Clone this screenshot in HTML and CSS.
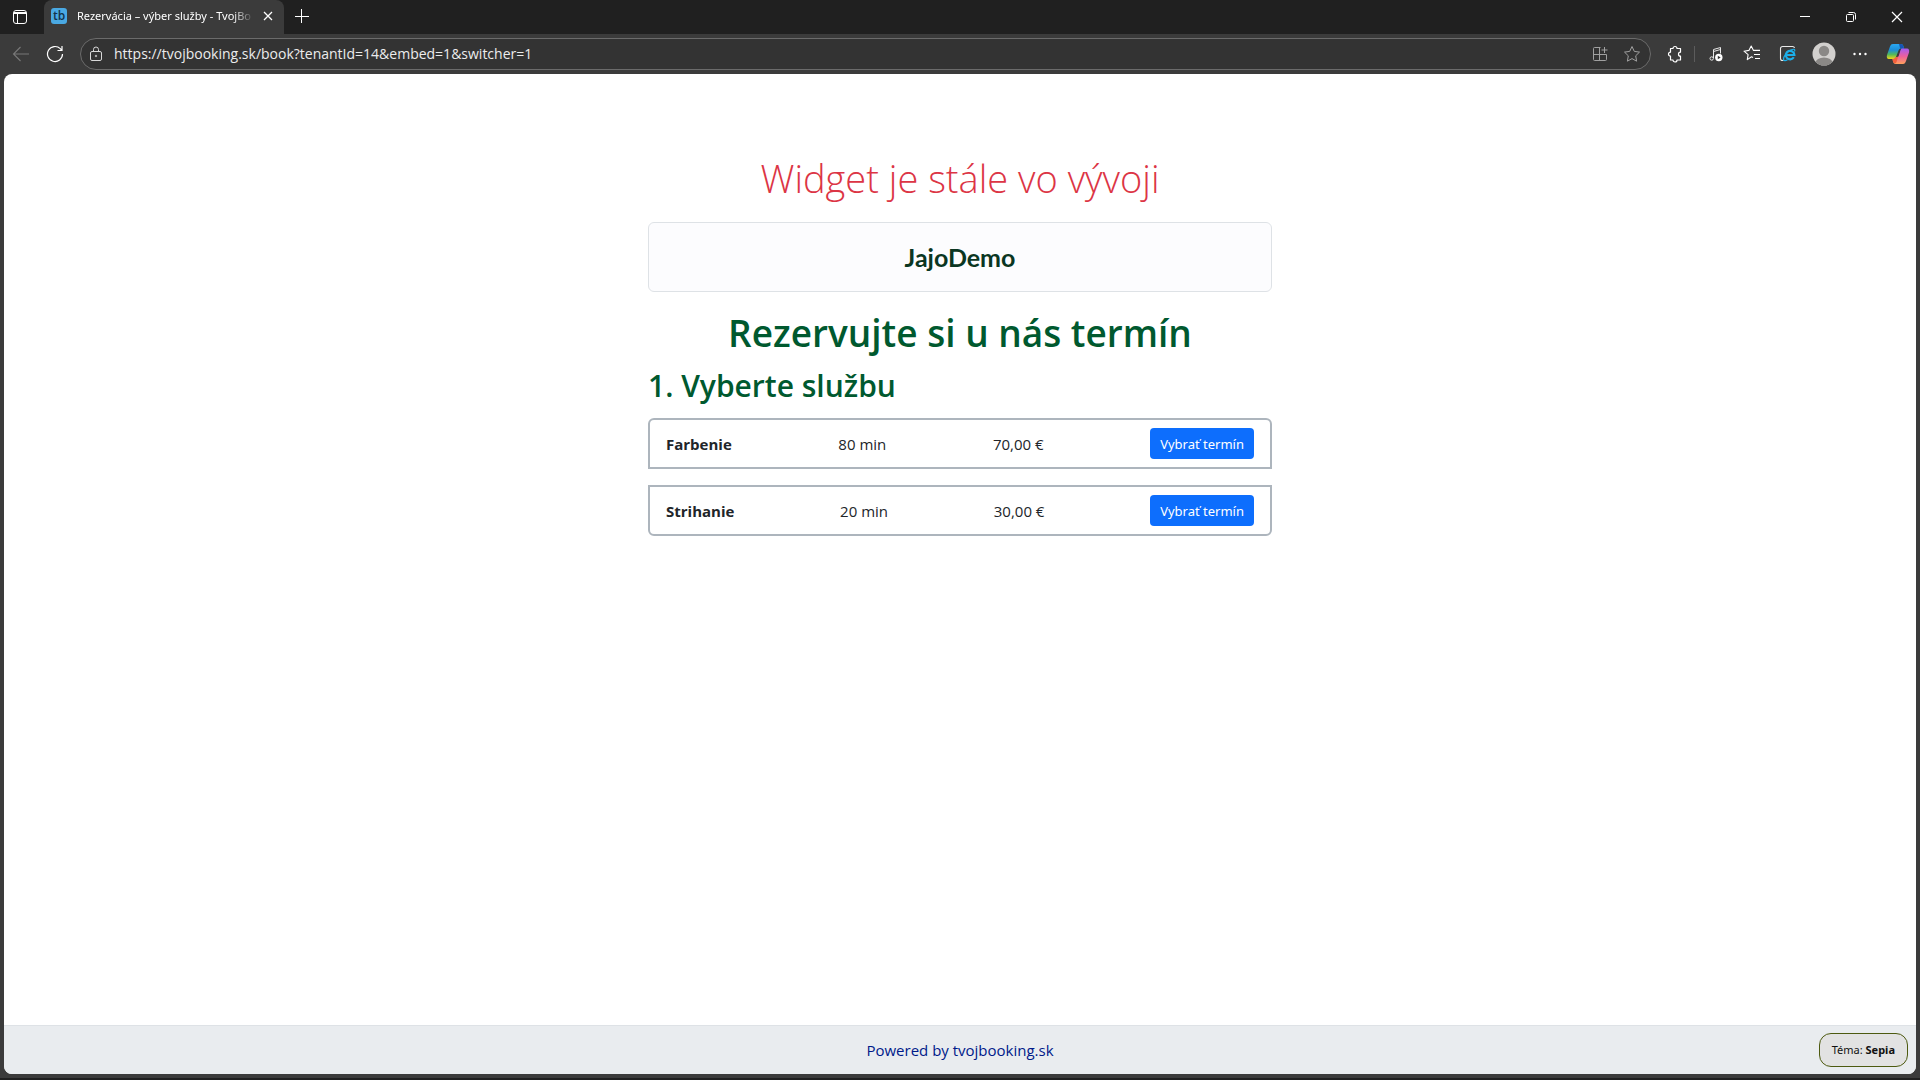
FILE: index.html
```html
<!DOCTYPE html>
<html lang="sk">
<head>
<meta charset="utf-8">
<title>Rezervácia – výber služby - TvojBooking</title>
<link rel="stylesheet" href="styles.css">
</head>
<body>
<div class="tabstrip">
  <button class="icon-btn workspaces" aria-label="Karty">
    <svg width="16" height="16" viewBox="0 0 16 16" fill="none" stroke="#fff"><rect x="1.5" y="1.5" width="13" height="13" rx="2.5"/><path d="M2 3.5h12M2 4.5h12M5.5 5v9" /></svg>
  </button>
  <div class="tab">
    <span class="favicon">tb</span>
    <span class="tab-title">Rezervácia – výber služby - TvojBo</span>
    <button class="icon-btn tab-close" aria-label="Zavrieť kartu">
      <svg width="10" height="10" viewBox="0 0 10 10" fill="none" stroke="#fff" stroke-width="1.3"><path d="M1 1l8 8M9 1L1 9"/></svg>
    </button>
  </div>
  <button class="icon-btn new-tab" aria-label="Nová karta">
    <svg width="16" height="16" viewBox="0 0 16 16" fill="none" stroke="#fff"><path d="M7.500 1v14M1 8.500h14"/></svg>
  </button>
  <div class="window-controls">
    <button class="icon-btn control" aria-label="Minimalizovať"><svg width="12" height="12" viewBox="0 0 12 12" fill="none" stroke="#fff"><path d="M1 5.500h10"/></svg></button>
    <button class="icon-btn control" aria-label="Obnoviť"><svg width="12" height="12" viewBox="0 0 12 12" fill="none" stroke="#fff"><rect x="1.500" y="3.500" width="7" height="7" rx="1"/><path d="M3.500 1.500h5a2 2 0 0 1 2 2v5"/></svg></button>
    <button class="icon-btn control" aria-label="Zavrieť"><svg width="12" height="12" viewBox="0 0 12 12" fill="none" stroke="#fff" stroke-width="1.200"><path d="M1 1l10 10M11 1L1 11"/></svg></button>
  </div>
</div>

<div class="window">
  <div class="toolbar">
    <button class="icon-btn tool" aria-label="Späť" disabled><svg width="18" height="18" viewBox="0 0 18 18" fill="none" stroke="#787878" stroke-width="1.100"><path d="M17 9H1.500M8.500 2L1.500 9l7 7"/></svg></button>
    <button class="icon-btn tool" aria-label="Obnoviť stránku"><svg width="18" height="18" viewBox="0 0 18 18" fill="none" stroke="#fff" stroke-width="1.200"><path d="M16.500 9a7.500 7.500 0 1 1-2.200-5.300L15.500 5M16 1v4.500h-4.500"/></svg></button>
    <div class="address">
      <svg width="14" height="16" viewBox="0 0 14 16" fill="none" stroke="#d8d8d8"><rect x="1.500" y="5.500" width="11" height="9" rx="1.500"/><path d="M4.500 5.500V3.500a2.500 2.500 0 0 1 5 0v2"/><circle cx="7" cy="10" r=".8" fill="#d8d8d8" stroke-width=".5"/></svg>
      <input class="url" type="text" aria-label="Adresa" value="https://tvojbooking.sk/book?tenantId=14&amp;embed=1&amp;switcher=1">
      <button class="icon-btn address-btn" aria-label="Inštalovať aplikáciu"><svg width="16" height="16" viewBox="0 0 16 16" fill="none" stroke="#a0a0a0"><path d="M8.500 1.500h-6a1 1 0 0 0-1 1v11a1 1 0 0 0 1 1h11a1 1 0 0 0 1-1v-5h-13M7.500 1.500v13M12.500 1v6M9.500 4h6"/></svg></button>
      <button class="icon-btn address-btn" aria-label="Pridať medzi obľúbené"><svg width="18" height="18" viewBox="0 0 18 18" fill="none" stroke="#a0a0a0" stroke-linejoin="round"><path d="M9 1.500l2.300 4.900 5.200.7-3.800 3.700.9 5.400L9 13.600l-4.600 2.600.9-5.400L1.500 7.100l5.200-.7z"/></svg></button>
    </div>
    <div class="actions">
      <button class="icon-btn action" aria-label="Rozšírenia"><svg width="18" height="18" viewBox="0 0 18 18" fill="none" stroke="#fff" stroke-width="1.200" stroke-linejoin="round"><path d="M4.500 3.500H7a2 2 0 0 1 4 0h3.500v3.700a2 2 0 1 0 0 4v3.800H11a2 2 0 0 1-4 0H4.500v-3.800a2 2 0 1 1 0-4z"/></svg></button>
      <span class="divider"></span>
      <button class="icon-btn action" aria-label="Médiá"><svg width="16" height="16" viewBox="0 0 16 16" fill="none" stroke="#e8e8e8"><path d="M5.500 12V3.500l7-2v6M5.500 5.500l7-2"/><circle cx="3.700" cy="12.500" r="1.700"/><circle cx="10.800" cy="11.500" r="3.700" fill="#fff" stroke="none"/><path d="M9.800 9.700v3.600l2.900-1.800z" fill="#333" stroke="none"/></svg></button>
      <button class="icon-btn action" aria-label="Obľúbené"><svg width="18" height="18" viewBox="0 0 18 18" fill="none" stroke="#fff" stroke-width="1.100" stroke-linejoin="round"><path d="M10 12.500l-1.500-.8-4.200 2.900.8-5L1 6.200l4.900-.8L8.200 1l2.300 4.400H17M11 9.500h6M12 13.500h5"/></svg></button>
      <button class="icon-btn action" aria-label="Režim Internet Explorer"><svg width="18" height="18" viewBox="0 0 18 18" fill="none"><path d="M4.500 15.500H3.500a2 2 0 0 1-2-2v-10a2 2 0 0 1 2-2h10a2 2 0 0 1 2 1.500" stroke="#e8e8e8" stroke-width="1.100"/><path d="M14.800 12.300a4.300 4.300 0 1 1 .6-2.300H7.500" stroke="#1caee9" stroke-width="2.200"/><path d="M15.500 6.500c1-2-.2-3-3.200-1.600C8 7 4 11.700 4.500 14.500c.4 1.700 2.500 1.200 4 .3" stroke="#1caee9" stroke-width="1.200"/></svg></button>
      <button class="icon-btn action" aria-label="Profil"><svg width="24" height="24" viewBox="0 0 24 24"><defs><clipPath id="face"><circle cx="12" cy="12" r="11.500"/></clipPath></defs><g clip-path="url(#face)"><path fill="#d2d0ce" d="M0 0h24v24H0z"/><circle cx="12" cy="9" r="5.200" fill="#8a8886"/><ellipse cx="12" cy="21" rx="8.500" ry="5.500" fill="#8a8886"/></g></svg></button>
      <button class="icon-btn action" aria-label="Ďalšie možnosti"><svg width="16" height="16" viewBox="0 0 16 16" fill="#fff"><circle cx="2.500" cy="8" r="1.200"/><circle cx="8" cy="8" r="1.200"/><circle cx="13.500" cy="8" r="1.200"/></svg></button>
      <button class="icon-btn copilot" aria-label="Copilot"><svg width="24" height="22" viewBox="0 0 24 22"><defs><linearGradient id="cool" x1="0" y1="0" x2="0" y2="1"><stop offset="0" stop-color="#2aa8f2"/><stop offset=".4" stop-color="#1d8ed8"/><stop offset=".7" stop-color="#53b95a"/><stop offset="1" stop-color="#f3d516"/></linearGradient><linearGradient id="warm" x1="0" y1="0" x2="0" y2="1"><stop offset="0" stop-color="#a25cf4"/><stop offset=".5" stop-color="#ec5f9d"/><stop offset="1" stop-color="#ffa05c"/></linearGradient></defs><path fill="url(#cool)" d="M7 1h8c1.500 0 2 1 2.500 2.500L18 5.500h-3c-1.500 0-2 .8-2.500 2L10 14c-.6 1.500-1.200 2-3 2H3C.8 16 .5 14 1 12L4 3.500C4.700 1.800 5.400 1 7 1z"/><path fill="#1655b5" d="M13 1h2c1.500 0 2 1 2.500 2.500L18 5.500h-3.500C13.500 4 13.500 2.500 13 1z"/><path fill="url(#warm)" d="M17 21H9.500C8 21 7.500 20 7 18.500L6.500 16c2.500 0 3-.8 3.500-2h1.500l2.500-6.500c.6-1.500 1.400-2 3-2h4c2 0 2.500 2 2 4l-3 8.500c-.7 2-1.400 3-3 3z"/><path fill="#f2603c" d="M6.500 16c2.500 0 3-.8 3.500-2h2l-1.500 5c-.5 1.500-2.500 2-3.500-.5z"/><path fill="#3b3b3b" d="M11 13.500L13.500 7c.3-.9.800-1.400 1.500-1.500L12.500 13.500z"/></svg></button>
    </div>
  </div>

  <div class="page">
    <main class="booking">
      <p class="notice">Widget je stále vo vývoji</p>
      <div class="brand">JajoDemo</div>
      <h1 class="title">Rezervujte si u nás termín</h1>
      <h2 class="step">1. Vyberte službu</h2>
      <ul class="services">
        <li class="service"><strong>Farbenie</strong><span>80 min</span><span>70,00 €</span><button class="pick">Vybrať termín</button></li>
        <li class="service"><strong>Strihanie</strong><span>20 min</span><span>30,00 €</span><button class="pick">Vybrať termín</button></li>
      </ul>
    </main>
    <footer class="footer">
      <a class="powered" href="#">Powered by tvojbooking.sk</a>
      <button class="theme">Téma: <b>Sepia</b></button>
    </footer>
  </div>
</div>
</body>
</html>
```

FILE: styles.css
```css
* { box-sizing: border-box; }

body {
  margin: 0;
  height: 100vh;
  padding-bottom: 2px;
  display: flex;
  flex-direction: column;
  background: #202020;
  color: #212529;
  font-family: "Open Sans", "Noto Sans", sans-serif;
  font-size: 15px;
  line-height: 24px;
}

button, input { font: inherit; }

.icon-btn {
  display: flex;
  align-items: center;
  justify-content: center;
  padding: 0;
  border: 0;
  background: none;
}

/* Browser chrome */
.tabstrip { display: flex; height: 34px; }
.workspaces { width: 40px; margin-right: 4px; }

.tab {
  display: flex;
  align-items: center;
  width: 240px;
  padding: 0 8px 2px 7px;
  border-radius: 8px 8px 0 0;
  background: #3b3b3b;
  color: #fff;
}
.favicon {
  width: 16px;
  height: 16px;
  border-radius: 3px;
  background: #4aa9e3;
  color: #12324a;
  font-size: 12px;
  font-weight: 600;
  line-height: 15px;
  text-align: center;
}
.tab-title {
  flex: 1;
  margin-left: 10px;
  white-space: nowrap;
  font-family: "Noto Sans", sans-serif;
  font-size: 11px;
  line-height: 16px;
  mask-image: linear-gradient(to right, #000 88%, transparent);
}
.tab-close { width: 16px; height: 16px; margin-left: 6px; }
.new-tab { width: 36px; height: 32px; }
.window-controls { display: flex; margin-left: auto; }
.control { width: 46px; }

.window {
  flex: 1;
  display: flex;
  flex-direction: column;
  padding: 0 4px 4px;
  background: #3b3b3b;
}
.toolbar { display: flex; align-items: center; height: 40px; }
.tool { width: 34px; height: 32px; }
.address {
  flex: 1;
  display: flex;
  align-items: center;
  height: 32px;
  margin-left: 8px;
  padding: 0 2px 0 8px;
  border: 1px solid #6b6b6b;
  border-radius: 16px;
  background: #333;
}
.url {
  flex: 1;
  margin-left: 11px;
  padding: 0;
  border: 0;
  outline: 0;
  background: none;
  color: #ececec;
  font-size: 14px;
}
.address-btn { width: 32px; height: 28px; }
.actions { display: flex; align-items: center; padding: 0 2px 0 6px; }
.action { width: 36px; height: 32px; }
.divider { width: 1px; height: 16px; margin: 0 3px 0 1px; background: #5c5c5c; }
.copilot { width: 32px; height: 32px; margin-left: 4px; }

/* Booking page */
.page {
  flex: 1;
  display: flex;
  flex-direction: column;
  overflow: hidden;
  border-radius: 8px;
  background: #fff;
}
.booking {
  flex: 1;
  width: 100%;
  max-width: 648px;
  margin: 0 auto;
  padding: 80px 12px 0;
}
.notice {
  margin: 0 0 20px;
  color: #dc3545;
  font-size: 38px;
  font-weight: 300;
  line-height: 48px;
  text-align: center;
}
.brand {
  padding: 18px 16px;
  border: 1px solid #dee2e6;
  border-radius: 6px;
  background: #fcfcfe;
  color: #0a3622;
  font-family: Lato, sans-serif;
  font-size: 25px;
  font-weight: 700;
  line-height: 32px;
  text-align: center;
}
.title {
  margin: 16px 0 8px;
  color: #00592f;
  font-size: 37px;
  font-weight: 600;
  line-height: 50px;
  text-align: center;
}
.step {
  margin: 0 0 12px;
  color: #00592f;
  font-size: 30px;
  font-weight: 600;
  line-height: 40px;
}
.services {
  display: flex;
  flex-direction: column;
  gap: 16px;
  margin: 0;
  padding: 0;
  list-style: none;
}
.service {
  display: flex;
  align-items: center;
  justify-content: space-between;
  padding: 8px 16px;
  border: 2px solid #adb5bd;
}
.service:first-child { border-radius: 6px 6px 0 0; }
.service:last-child { border-radius: 0 0 6px 6px; }
.pick {
  height: 31px;
  padding: 0 10px;
  border: 0;
  border-radius: 4px;
  background: #0d6efd;
  color: #fff;
  font-family: "Noto Sans", sans-serif;
  font-size: 13px;
}
.footer {
  position: relative;
  padding: 12px 16px;
  border-top: 1px solid #dee2e6;
  background: #e9ecef;
  text-align: center;
}
.powered { color: #001a8a; text-decoration: none; }
.theme {
  position: absolute;
  top: 7px;
  right: 8px;
  height: 34px;
  padding: 0 12px;
  border: 1px solid #4d5a10;
  border-radius: 12px;
  background: #e2e2e2;
  color: #111;
  font-family: "Noto Sans", sans-serif;
  font-size: 11px;
}
```
